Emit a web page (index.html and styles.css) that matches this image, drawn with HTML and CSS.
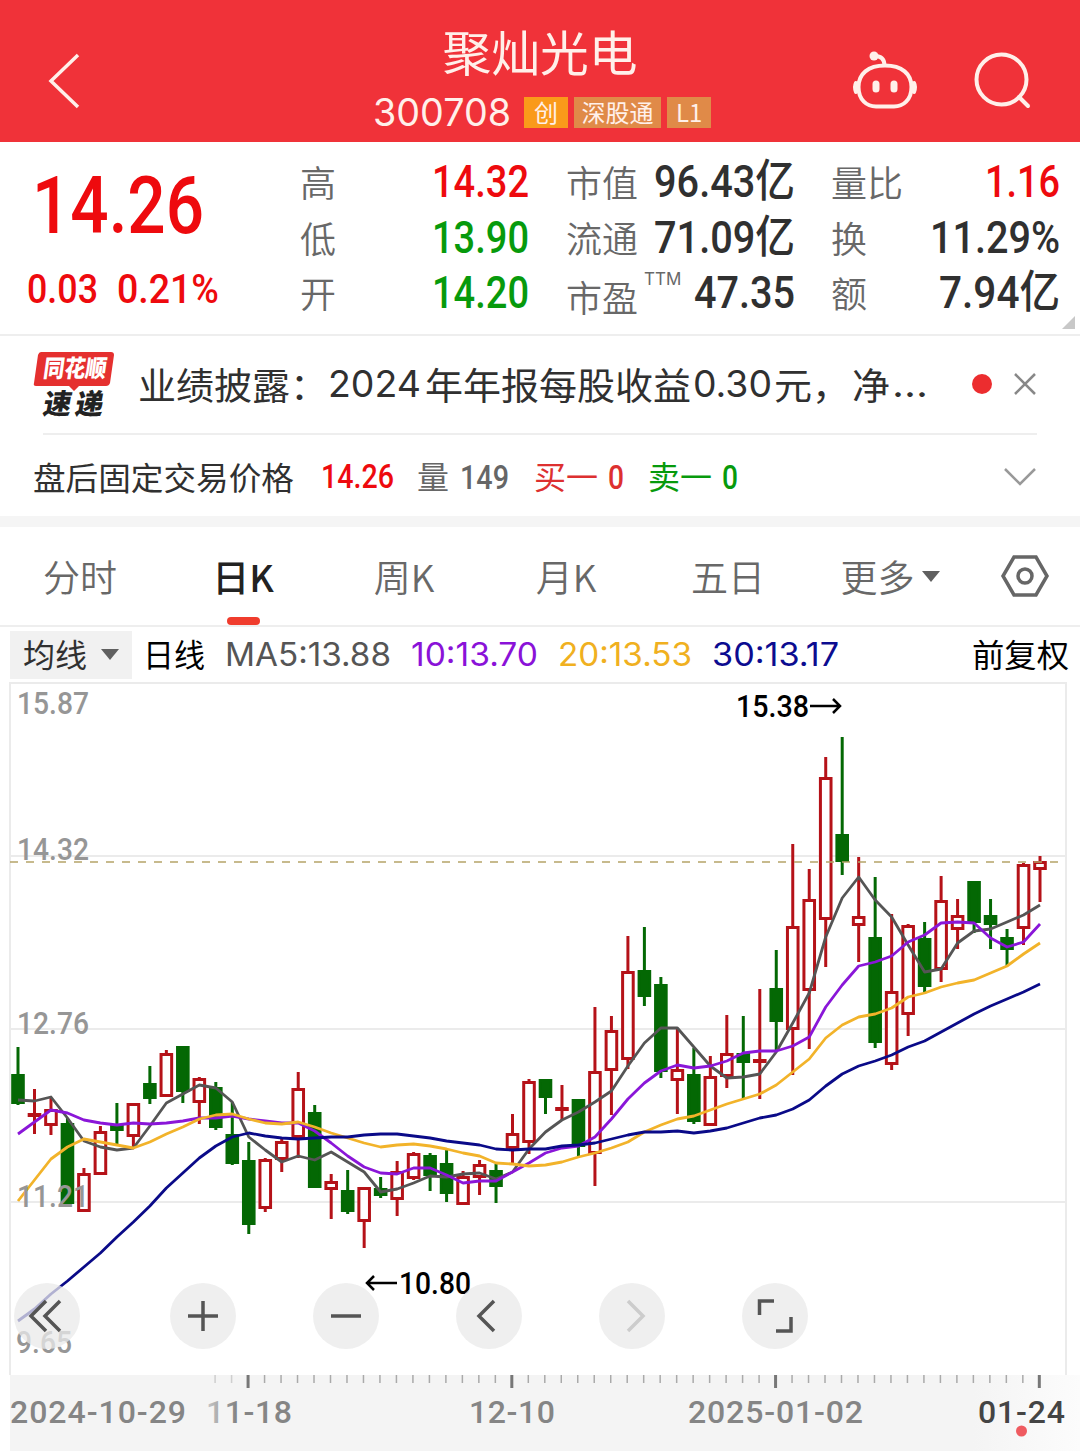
FILE: index.html
```html
<!DOCTYPE html>
<html lang="zh-CN">
<head>
    <meta charset="UTF-8">
    <meta name="viewport" content="width=device-width, initial-scale=1.0">
    <title>聚灿光电 300708</title>
    <link rel="stylesheet" href="styles.css">
</head>
<body>

<header class="header">
    <svg class="back" width="32" height="58" viewBox="0 0 32 58"><path d="M30 3 L3 29 L30 55"/></svg>
    <div class="title">
        <h1><span class="fit" data-w="195">聚灿光电</span></h1>
        <div class="code">
            <span class="fit code-num" data-w="138">300708</span>
            <span class="tag tag-main">创</span>
            <span class="tag">深股通</span>
            <span class="tag tag-l1">L1</span>
        </div>
    </div>
    <div class="header-icons">
        <svg width="66" height="60" viewBox="0 0 66 60">
            <path d="M33 13.5 C50 13.5 59.5 22 59.5 35 C59.5 48 51 54.5 42 54.5 H24 C15 54.5 6.5 48 6.5 35 C6.5 22 16 13.5 33 13.5Z"/>
            <path d="M23 4 Q32 4 32.500 13"/>
            <circle class="solid" cx="22" cy="4" r="4.500"/>
            <path d="M4 31 Q2 35 4 40 M62 31 Q64 35 62 40"/>
            <path class="eyes" d="M24 32 V37 M42 32 V37"/>
        </svg>
        <svg width="58" height="58" viewBox="0 0 58 58">
            <circle cx="27.500" cy="27.500" r="25"/>
            <path d="M45 45 L54 54"/>
        </svg>
    </div>
</header>

<section class="quote">
    <div class="price">
        <div class="last red"><span class="fit num" data-w="172">14.26</span></div>
        <div class="change red"><span class="fit num" data-w="71">0.03</span><span class="fit num" data-w="102">0.21%</span></div>
    </div>
    <div class="stats">
        <div class="stat"><span class="label">高</span><span class="fit num red" data-w="97">14.32</span></div>
        <div class="stat"><span class="label">低</span><span class="fit num green" data-w="97">13.90</span></div>
        <div class="stat"><span class="label">开</span><span class="fit num green" data-w="97">14.20</span></div>
    </div>
    <div class="stats">
        <div class="stat"><span class="label">市值</span><span class="fit num" data-w="141">96.43亿</span></div>
        <div class="stat"><span class="label">流通</span><span class="fit num" data-w="141">71.09亿</span></div>
        <div class="stat"><span class="label low">市盈<sup>TTM</sup></span><span class="fit num" data-w="101">47.35</span></div>
    </div>
    <div class="stats">
        <div class="stat"><span class="label">量比</span><span class="fit num red" data-w="75">1.16</span></div>
        <div class="stat"><span class="label">换</span><span class="fit num" data-w="130">11.29%</span></div>
        <div class="stat"><span class="label">额</span><span class="fit num" data-w="121">7.94亿</span></div>
    </div>
    <i class="corner"></i>
</section>

<section class="news">
    <svg class="logo" width="82" height="68" viewBox="0 0 82 68">
        <path fill="#e5302f" d="M8 0 H78 Q81 0 81 3 L77 31 Q76 34 73 34 H46 L41 39 L36 34 H3 Q0 34 1 31 L5 3 Q6 0 8 0Z"/>
        <text x="13" y="25" transform="skewX(-8)" fill="#fff" font-size="24" textLength="63" lengthAdjust="spacingAndGlyphs">同花顺</text>
        <text x="20" y="62" transform="skewX(-10)" fill="#222" font-size="28" textLength="60" lengthAdjust="spacing">速递</text>
    </svg>
    <div class="news-text">
        <span class="fit" data-w="190">业绩披露：</span>
        <span class="fit latin year" data-w="93">2024</span>
        <span class="fit" data-w="266">年年报每股收益</span>
        <span class="fit latin" data-w="79">0.30</span>
        <span class="fit" data-w="76">元，</span>
        <span class="fit" data-w="38">净</span>
        <span class="fit latin" data-w="36">...</span>
    </div>
    <i class="dot"></i>
    <svg class="close" width="22" height="22" viewBox="0 0 22 22"><path d="M1 1 L21 21 M21 1 L1 21"/></svg>
</section>

<section class="after">
    <span class="fit" data-w="261">盘后固定交易价格</span>
    <span class="fit num red after-price" data-w="73">14.26</span>
    <span class="gray after-vol">量<span class="fit num" data-w="49">149</span></span>
    <span class="buy">买一<span class="fit num" data-w="16">0</span></span>
    <span class="sell">卖一<span class="fit num" data-w="16">0</span></span>
    <svg class="chevron" width="32" height="20" viewBox="0 0 32 20"><path d="M1 2 L16 17 L31 2"/></svg>
</section>

<nav class="tabs">
    <a>分时</a>
    <a class="active">日K</a>
    <a>周K</a>
    <a>月K</a>
    <a>五日</a>
    <a>更多<i class="caret"></i></a>
    <svg width="48" height="42" viewBox="0 0 48 42">
        <path d="M13 2 H35 L46 21 L35 40 H13 L2 21Z"/>
        <circle cx="24" cy="21" r="7"/>
    </svg>
</nav>

<section class="ma">
    <div class="ma-select"><span>均线</span><i class="caret"></i></div>
    <span class="fit cjk day" data-w="62">日线</span>
    <span class="fit latin ma5" data-w="166">MA5:13.88</span>
    <span class="fit latin ma10" data-w="127">10:13.70</span>
    <span class="fit latin ma20" data-w="134">20:13.53</span>
    <span class="fit latin ma30" data-w="127">30:13.17</span>
    <span class="fit cjk adjust" data-w="97">前复权</span>
</section>

<section class="chart">
    <svg id="kline" width="1080" height="769" viewBox="0 682 1080 769"></svg>
    <div class="tools">
        <button class="first"><svg viewBox="0 0 66 66"><path d="M32 18 L17 33 L32 48 M46 18 L31 33 L46 48"/></svg></button>
        <button><svg viewBox="0 0 66 66"><path d="M33 18 V48 M18 33 H48"/></svg></button>
        <button><svg viewBox="0 0 66 66"><path d="M18 33 H48"/></svg></button>
        <button><svg viewBox="0 0 66 66"><path d="M38 18 L23 33 L38 48"/></svg></button>
        <button class="disabled"><svg viewBox="0 0 66 66"><path d="M29 18 L44 33 L29 48"/></svg></button>
        <button><svg viewBox="0 0 66 66"><path d="M17.500 32 V18 H32 M34 48 H49 V34"/></svg></button>
    </div>
</section>

<script src="chart.js"></script>
</body>
</html>
```

FILE: styles.css
```css
* { box-sizing: border-box; }
body { margin: 0; width: 1080px; height: 1451px; overflow: hidden; background: #fff; color: #303030; font-family: "Noto Sans CJK SC", sans-serif; }
svg { display: block; flex: none; fill: none; overflow: visible; }
i { display: block; flex: none; }

.fit { display: inline-block; white-space: nowrap; transform-origin: 0 50%; flex: none; }
.num { font-family: Roboto, "Noto Sans CJK SC", sans-serif; font-weight: 500; }
.latin { font-family: Inter, "Noto Sans CJK SC", sans-serif; }
.red { color: #ee0a0e; }
.green { color: #079a0c; }
.gray { color: #666; }

.header { display: flex; justify-content: space-between; height: 142px; padding: 0 48px; background: #f03239; color: #fff; position: relative; }
.header svg { stroke: #fff0ea; stroke-width: 4; stroke-linecap: round; }
.header .back { margin-top: 52px; stroke-width: 3.5; stroke-linecap: butt; }
.title { position: absolute; left: 373px; top: 0; width: 338px; }
.title h1 { margin: 20px 0 0; padding-right: 7px; text-align: center; font-size: 48px; font-weight: 400; line-height: 60px; color: #fff0ea; }
.code { display: flex; align-items: center; gap: 6px; margin-top: 13px; height: 38px; color: #fff0ea; }
.code-num { font-family: Inter, sans-serif; font-size: 38px; line-height: 38px; margin-right: 7px; }
.tag { height: 31px; background: #e08a48; font-size: 24px; line-height: 29px; width: 88px; text-align: center; }
.tag-main { background: #fa9a1a; width: 44px; }
.tag-l1 { width: 44px; }
.header-icons { display: flex; gap: 56px; padding-top: 52px; }
.header-icons .solid { fill: #fff0ea; stroke: none; }
.header-icons .eyes { stroke-width: 7; }

.quote { display: flex; height: 194px; border-bottom: 2px solid #eee; position: relative; }
.price { width: 300px; padding-left: 32px; }
.last { height: 112px; padding-top: 11px; font-size: 79px; line-height: 106px; }
.last .fit { display: block; line-height: 106px; }
.change { display: flex; gap: 19px; margin-left: -5px; font-size: 41px; line-height: 70px; }
.stats { width: 229px; margin-right: 37px; padding-top: 12px; }
.stats:nth-child(3) { margin-right: 36px; }
.stats:nth-child(4) { margin-right: 0; }
.stat { display: flex; justify-content: space-between; height: 55.5px; line-height: 55.5px; font-size: 45px; }
.label { font-size: 36px; font-weight: 350; color: #686868; }
.label.low { padding-top: 4px; white-space: nowrap; display: flex; }
.label sup { font-family: Inter, sans-serif; font-weight: 400; font-size: 17px; line-height: 18px; margin: 1px 0 0 6px; }
.corner { position: absolute; right: 5px; bottom: 5px; border-left: 13px solid transparent; border-bottom: 13px solid #c8c8c8; }

.news { display: flex; align-items: center; height: 99px; margin: 0 43px 0 33px; position: relative; }
.news::after { content: ""; position: absolute; left: 10px; right: 0; bottom: 0; height: 2px; background: #eee; }
.logo text { font-family: "Noto Sans CJK SC", sans-serif; font-weight: 900; }
.news-text { display: flex; width: 801px; margin: -4px 0 0 23px; font-size: 37px; line-height: 60px; }
.news-text .fit { margin-right: 2px; }
.news-text .fit:first-child { margin-right: 0; }
.news-text .year { margin-right: 4px; }
.dot { width: 20px; height: 20px; margin-top: -3px; margin-left: 33px; border-radius: 50%; background: #ec2d2f; }
.close { margin: -3px 0 0 22px; stroke: #888; stroke-width: 2.5; }

.after { display: flex; align-items: center; height: 92px; padding: 5px 44px 9px 33px; border-bottom: 11px solid #f5f5f5; font-size: 32px; line-height: 40px; }
.after > span { margin-top: 4px; }
.after .num { font-size: 34px; }
.after .after-price { margin: 4px 0 0 27px; }
.after-vol { margin-left: 23px; }
.after-vol .num { margin-left: 11px; }
.buy { margin-left: 25px; color: #dd3030; }
.sell { margin-left: 24px; color: #079a0c; }
.buy .num, .sell .num { margin-left: 10px; }
.chevron { margin: 6px 0 0 auto; stroke: #999; stroke-width: 2.5; }

.tabs { display: flex; align-items: center; height: 100px; border-bottom: 2px solid #eee; }
.tabs a { width: 162px; height: 100px; padding: 0 2px 0 0; display: flex; align-items: center; justify-content: center; font-size: 37px; font-weight: 350; color: #686868; position: relative; }
.tabs .active { padding-right: 0; font-weight: 500; color: #222; }
.tabs .active::after { content: ""; position: absolute; left: 65px; bottom: 1px; width: 33px; height: 8px; border-radius: 4px; background: #f03c2d; }
.tabs svg { margin-left: 29px; stroke: #666; stroke-width: 3.5; }
.caret { margin-left: 7px; border: 9px solid transparent; border-top: 11px solid #606060; border-bottom: 0; }

.ma { display: flex; align-items: center; height: 55px; padding-left: 10px; font-size: 32px; line-height: 50px; }
.ma-select { display: flex; align-items: center; width: 122px; height: 48px; padding-left: 13px; background: #f1f1f1; }
.ma-select span, .cjk { margin-top: -4px; }
.ma-select .caret { margin-left: 14px; }
.day { margin-left: 11px; color: #000; }
.ma5 { margin-left: 20px; color: #555; }
.ma10 { margin-left: 20px; color: #8a12d8; }
.ma20 { margin-left: 20px; color: #f0b020; }
.ma30 { margin-left: 20px; color: #0c0c90; }
.adjust { margin-left: auto; margin-right: 11px; color: #000; }

.chart { position: relative; height: 769px; }
.chart text { font-family: Roboto, sans-serif; font-weight: 500; }
.grid { stroke: #ebebeb; stroke-width: 2; }
.up { fill: #fff; stroke: #b51218; stroke-width: 3; }
.down { fill: #046804; stroke: #046804; stroke-width: 3; }
.line { stroke-width: 2.8; stroke-linejoin: round; }
.tools { position: absolute; left: 14px; top: 601px; display: flex; gap: 77px; }
.tools .first { margin-right: 13px; }
.tools button { width: 66px; height: 66px; padding: 0; border: 0; border-radius: 50%; background: rgba(234, 234, 234, 0.75); }
.tools svg { stroke: #555; stroke-width: 3.5; }
.tools .disabled svg { stroke: #ccc; }
```

FILE: chart.js
```js
// squeeze text into the width given by data-w
document.querySelectorAll('.fit').forEach(el => {
    el.style.width = 'max-content';
    const natural = el.getBoundingClientRect().width;
    const width = Number(el.dataset.w);
    el.style.transform = `scaleX(${width / natural})`;
    el.style.width = width + 'px';
});

// type, high, body top, body bottom, low
const candles = [
    ['d',1047,1074,1104,1105], ['u',1089,1113,1117,1134], ['u',1098,1109,1126,1135], ['d',1118,1123,1204,1204],
    ['u',1168,1173,1212,1212], ['u',1126,1131,1175,1175], ['d',1103,1125,1131,1144], ['u',1103,1103,1137,1148],
    ['d',1066,1083,1099,1104], ['u',1050,1053,1097,1097], ['d',1046,1046,1092,1103], ['u',1077,1078,1103,1124],
    ['d',1082,1087,1128,1130], ['d',1102,1134,1164,1165], ['d',1142,1160,1225,1234], ['u',1158,1159,1209,1212],
    ['u',1138,1141,1160,1172], ['u',1072,1088,1138,1158], ['d',1105,1112,1188,1188], ['u',1174,1181,1190,1219],
    ['d',1170,1190,1212,1214], ['u',1187,1187,1222,1248], ['d',1177,1188,1196,1198], ['u',1161,1171,1200,1216],
    ['u',1152,1153,1179,1180], ['d',1153,1155,1176,1191], ['d',1150,1163,1194,1202], ['u',1171,1176,1205,1205],
    ['u',1160,1164,1178,1195], ['d',1164,1170,1187,1203], ['u',1114,1133,1149,1164], ['u',1079,1081,1143,1154],
    ['d',1079,1079,1098,1114], ['u',1085,1107,1111,1120], ['d',1099,1099,1147,1156], ['u',1007,1071,1154,1186],
    ['u',1016,1030,1071,1115], ['u',936,971,1060,1069], ['d',927,970,997,1006], ['d',977,984,1072,1078],
    ['u',1028,1069,1081,1114], ['d',1048,1074,1122,1124], ['u',1056,1076,1126,1126], ['u',1015,1053,1077,1088],
    ['d',1016,1053,1063,1099], ['u',989,1059,1063,1099], ['d',950,988,1022,1050], ['u',844,926,1030,1075],
    ['u',869,899,991,1049], ['u',757,777,920,967], ['d',737,834,862,875], ['u',857,916,926,962],
    ['d',877,937,1043,1048], ['u',914,991,1065,1070], ['u',924,925,1015,1036], ['d',922,938,987,994],
    ['u',876,900,970,982], ['u',899,915,930,949], ['d',881,881,923,933], ['d',899,915,925,949],
    ['d',929,937,950,966], ['u',863,864,929,945], ['u',856,861,870,902]
];

const averages = {
    '#555555': [1100,1101,1097,1118,1141,1147,1150,1148,1126,1103,1094,1085,1088,1102,1137,1150,1162,1156,1160,1152,1162,1172,1192,1189,1183,1176,1177,1174,1173,1179,1172,1149,1132,1120,1112,1102,1091,1066,1043,1028,1028,1047,1066,1078,1077,1074,1052,1023,993,937,898,877,900,917,945,972,969,943,931,929,922,915,905],
    '#8a16d8': [1134,1122,1110,1113,1120,1123,1125,1123,1124,1123,1121,1118,1118,1116,1119,1121,1123,1123,1131,1143,1156,1167,1173,1174,1168,1168,1175,1183,1181,1181,1172,1163,1153,1148,1146,1137,1119,1099,1083,1071,1065,1068,1066,1061,1053,1051,1051,1046,1037,1007,985,966,962,956,942,935,923,922,923,938,947,942,924],
    '#f2b32a': [1201,1180,1159,1147,1139,1142,1145,1148,1142,1134,1127,1119,1115,1114,1119,1123,1124,1122,1127,1133,1138,1143,1147,1145,1144,1146,1149,1153,1156,1163,1164,1166,1165,1162,1157,1153,1148,1142,1132,1125,1119,1116,1110,1104,1099,1094,1085,1072,1059,1038,1025,1017,1014,1008,997,993,987,983,980,973,966,954,943],
    '#0a0a88': [1321,1309,1294,1281,1267,1253,1237,1222,1206,1188,1173,1158,1146,1137,1133,1136,1138,1139,1138,1137,1137,1135,1134,1134,1136,1138,1141,1143,1145,1149,1150,1149,1149,1146,1145,1143,1139,1135,1132,1132,1131,1133,1131,1128,1123,1118,1115,1109,1100,1086,1074,1066,1061,1055,1047,1041,1032,1023,1014,1006,999,992,984]
};

const x = i => 18 + i * 16.484;

function label(text, left, base, width, color, adjust = 'spacingAndGlyphs') {
    return `<text x="${left}" y="${base}" font-size="32" fill="${color}" textLength="${width}" lengthAdjust="${adjust}">${text}</text>`;
}

let out = '<path class="grid" d="M10 1375 V683 H1066 V1375 M10 856 H1066 M10 1029 H1066 M10 1202 H1066"/>';

candles.forEach(([type, high, top, bottom, low], i) => {
    const cls = type === 'u' ? 'up' : 'down';
    const c = x(i);
    out += `<path class="${cls}" d="M${c} ${high} V${low}"/>`;
    out += `<rect class="${cls}" x="${c - 5.3}" y="${top + 1.5}" width="10.6" height="${bottom - top - 3}"/>`;
});

for (const color in averages) {
    const points = averages[color].map((y, i) => `${x(i)},${y}`).join(' ');
    out += `<polyline class="line" stroke="${color}" points="${points}"/>`;
}

out += '<path stroke="#b5a468" stroke-width="1.4" stroke-dasharray="8 8" d="M10 862 H1066"/>';

out += label('15.87', 17, 714, 72, '#969696');
out += label('14.32', 17, 860, 72, '#969696');
out += label('12.76', 17, 1034, 72, '#969696');
out += label('11.21', 17, 1207, 72, '#969696');
out += label('9.65', 16, 1353, 56, '#969696');
out += label('15.38', 736, 717, 73, '#000');
out += label('10.80', 399, 1294, 72, '#000');
out += '<path stroke="#000" stroke-width="2.5" d="M810 706 H840 M833 699 L840 706 L833 713 M397 1283 H367 M374 1276 L367 1283 L374 1290"/>';

out += '<defs><linearGradient id="fade"><stop offset="0.9" stop-color="#f4f4f4"/><stop offset="1" stop-color="#fcfcfc"/></linearGradient>';
out += '<linearGradient id="dim" gradientUnits="userSpaceOnUse" x1="206" y1="0" x2="236" y2="0"><stop offset="0" stop-color="#c8c8c8"/><stop offset="1" stop-color="#858585"/></linearGradient></defs>';
out += '<rect x="10" y="1375" width="1070" height="76" fill="url(#fade)"/>';
for (let i = 12; i < 63; i++) {
    const major = (i - 14) % 16 === 0;
    out += `<path stroke="${major ? '#777' : '#aaa'}" stroke-width="${major ? 3 : 1.5}" opacity="${i < 14 ? 0.5 : 1}" d="M${x(i) - 0.7} 1375 V${major ? 1388 : 1383}"/>`;
}
out += label('2024-10-29', 10, 1423, 176, '#858585', 'spacing');
out += label('11-18', 206, 1423, 86, 'url(#dim)', 'spacing');
out += label('12-10', 469, 1423, 86, '#858585', 'spacing');
out += label('2025-01-02', 688, 1423, 175, '#858585', 'spacing');
out += label('01-24', 978, 1423, 87, '#444', 'spacing');
out += '<circle cx="1021.5" cy="1431" r="5.5" fill="#ef5b60"/>';

document.getElementById('kline').innerHTML = out;
```
